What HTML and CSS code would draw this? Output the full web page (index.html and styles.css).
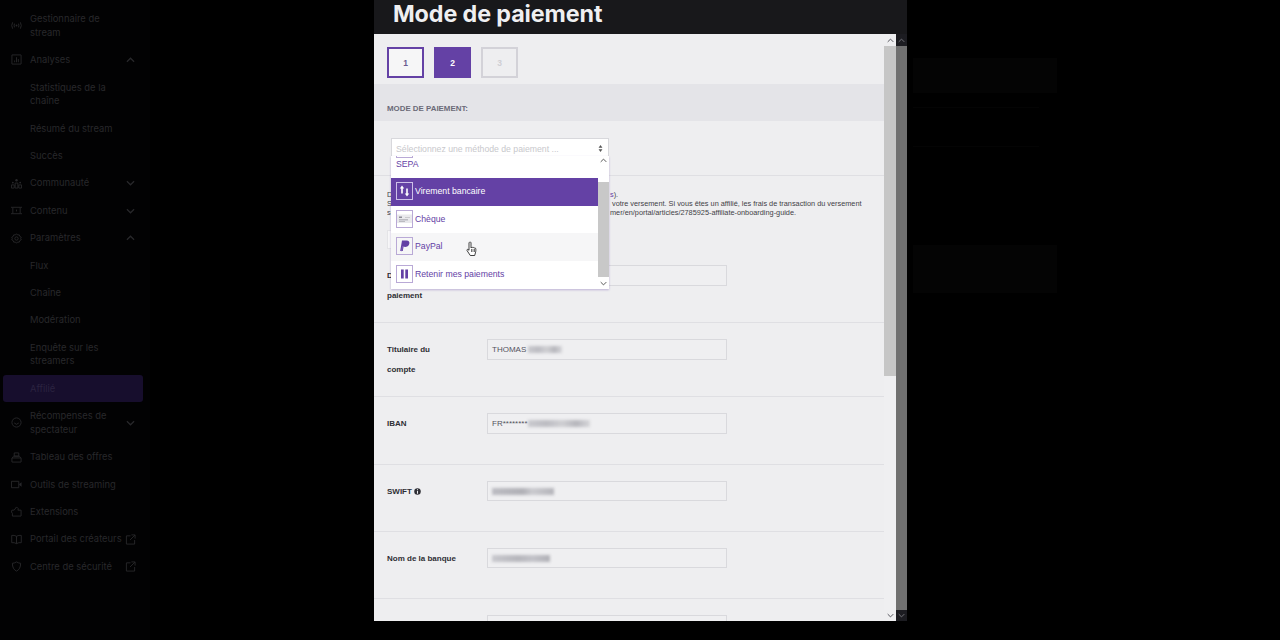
FILE: index.html
```html
<!DOCTYPE html>
<html lang="fr">
<head>
<meta charset="utf-8">
<title>Mode de paiement</title>
<link rel="stylesheet" href="styles.css">
</head>
<body>
<svg class="defs" width="0" height="0" aria-hidden="true">
  <symbol id="up" viewBox="0 0 10 6"><path d="M1 5l4-4 4 4" fill="none" stroke="currentColor" stroke-width="1.4"/></symbol>
  <symbol id="down" viewBox="0 0 10 6"><path d="M1 1l4 4 4-4" fill="none" stroke="currentColor" stroke-width="1.4"/></symbol>
  <symbol id="ext" viewBox="0 0 12 12"><path d="M6 2H1.500v9h9V6.500M7 1h4v4M11 1L5.500 6.500" fill="none" stroke="currentColor" stroke-width="1"/></symbol>
</svg>
<div class="app">
  <nav class="sidebar">
    <a class="nav-item"><svg class="ico" viewBox="0 0 12 12"><path d="M1.800 2.500Q-.2 6 1.800 9.500M10.200 2.500Q12.200 6 10.200 9.500M3.800 4Q3 6 3.800 8M8.200 4Q9 6 8.200 8" fill="none" stroke="currentColor"/><circle cx="6" cy="6" r="1" fill="currentColor"/></svg><span class="label">Gestionnaire de stream</span></a>
    <a class="nav-item"><svg class="ico" viewBox="0 0 12 12"><path d="M1 1h10v10H1zM4 9V7M6 9V3.500M8 9V5.500" fill="none" stroke="currentColor"/></svg><span class="label">Analyses</span><svg class="chev"><use href="#up"/></svg></a>
    <a class="nav-item sub"><span class="label">Statistiques de la chaîne</span></a>
    <a class="nav-item sub"><span class="label">Résumé du stream</span></a>
    <a class="nav-item sub"><span class="label">Succès</span></a>
    <a class="nav-item"><svg class="ico" viewBox="0 0 12 12"><path d="M.5 11V7.500h3V11zM4.500 11V5.500h3V11zM8.500 11V7.500h3V11z" fill="none" stroke="currentColor"/><circle cx="2" cy="5" r="1" fill="currentColor"/><circle cx="6" cy="2.500" r="1.300" fill="currentColor"/><circle cx="10" cy="5" r="1" fill="currentColor"/></svg><span class="label">Communauté</span><svg class="chev"><use href="#down"/></svg></a>
    <a class="nav-item"><svg class="ico" viewBox="0 0 12 12"><path d="M2 2.500h8v7H2zM0 2.500h2M10 2.500h2M0 9.500h2M10 9.500h2M6 5v2" fill="none" stroke="currentColor"/></svg><span class="label">Contenu</span><svg class="chev"><use href="#down"/></svg></a>
    <a class="nav-item"><svg class="ico" viewBox="0 0 12 12"><path d="M6 .8l1.200 1.400 1.800-.2.600 1.700 1.600.9-.6 1.400.6 1.400-1.600.9-.6 1.700-1.800-.2L6 11.200 4.800 9.800 3 10l-.6-1.700-1.600-.9L1.400 6 .8 4.600l1.600-.9L3 2l1.800.2z" fill="none" stroke="currentColor"/><circle cx="6" cy="6" r="1.800" fill="none" stroke="currentColor"/></svg><span class="label">Paramètres</span><svg class="chev"><use href="#up"/></svg></a>
    <a class="nav-item sub"><span class="label">Flux</span></a>
    <a class="nav-item sub"><span class="label">Chaîne</span></a>
    <a class="nav-item sub"><span class="label">Modération</span></a>
    <a class="nav-item sub"><span class="label">Enquête sur les streamers</span></a>
    <a class="nav-item sub active"><span class="label">Affilié</span></a>
    <a class="nav-item"><svg class="ico" viewBox="0 0 12 12"><circle cx="6" cy="6" r="5" fill="none" stroke="currentColor"/><path d="M3.500 6.500Q6 9.500 8.500 6.500" fill="none" stroke="currentColor"/></svg><span class="label">Récompenses de spectateur</span><svg class="chev"><use href="#down"/></svg></a>
    <a class="nav-item"><svg class="ico" viewBox="0 0 12 12"><path d="M3.500 1h5v3.500h-5zM1 6.500L3 4.500h6l2 2V11H1zM1 6.500h10" fill="none" stroke="currentColor"/></svg><span class="label">Tableau des offres</span></a>
    <a class="nav-item"><svg class="ico" viewBox="0 0 12 12"><path d="M.5 2.500h8v7h-8z" fill="none" stroke="currentColor"/><path d="M9 5.500L11.500 3.500v5L9 6.500z" fill="currentColor"/></svg><span class="label">Outils de streaming</span></a>
    <a class="nav-item"><svg class="ico" viewBox="0 0 12 12"><path d="M1 4.500h2.500L6 1l2 2-.5 1.500H11V11H1.500V8L.5 6.500z" fill="none" stroke="currentColor"/></svg><span class="label">Extensions</span></a>
    <a class="nav-item"><svg class="ico" viewBox="0 0 12 12"><path d="M6 2.500Q3.500 1 .8 1.500v8Q3.500 9 6 10.500 8.500 9 11.200 9.500v-8Q8.500 1 6 2.500zM6 2.500v8" fill="none" stroke="currentColor"/></svg><span class="label">Portail des créateurs</span><svg class="ext"><use href="#ext"/></svg></a>
    <a class="nav-item"><svg class="ico" viewBox="0 0 12 12"><path d="M6 1Q8.500 2.500 10.500 2.500 10.500 9 6 11 1.500 9 1.500 2.500 3.500 2.500 6 1z" fill="none" stroke="currentColor"/></svg><span class="label">Centre de sécurité</span><svg class="ext"><use href="#ext"/></svg></a>
  </nav>

  <section class="modal">
    <header class="modal-head"><h1>Mode de paiement</h1></header>
    <div class="modal-body">
      <div class="content">
        <div class="steps">
          <span class="step done">1</span>
          <span class="step current">2</span>
          <span class="step todo">3</span>
        </div>
        <h2 class="section-head">MODE DE PAIEMENT:</h2>
        <div class="select-row">
          <div class="select">
            <div class="select-box"><span>Sélectionnez une méthode de paiement ...</span><svg class="sort" viewBox="0 0 6 9"><path d="M3 0l2.500 3.500h-5zM3 9L.5 5.500h5z" fill="#555"/></svg></div>
            <div class="dropdown">
              <ul class="options">
                <li class="opt-sepa"><span class="sepa-frag"></span>SEPA</li>
                <li class="opt selected"><span class="opt-ico"><svg viewBox="0 0 15 15"><path d="M5 2l2.200 3H5.800v5H4.200V5H2.800zM10 13l-2.200-3h1.400V5h1.600v5h1.400z" fill="#fff"/></svg></span>Virement bancaire</li>
                <li class="opt"><span class="opt-ico"><svg viewBox="0 0 15 15"><rect x="0" y="3" width="15" height="8.500" fill="#e9e9ec"/><path d="M2 5h3v1.500H2zM2 8h9v.8H2zM2 9.500h6v.6H2z" fill="#8d8d96"/><path d="M8 6h5" stroke="#b5b5bb" stroke-width=".6"/></svg></span>Chèque</li>
                <li class="opt hover"><span class="opt-ico"><svg viewBox="0 0 15 15"><path d="M5 2h4.500c2.500 0 3.200 1.600 2.800 3.200C11.800 7.500 10 8.500 8 8.500H6.500L5.800 12.500H3.200z" fill="#6441a5"/><path d="M4.500 12.800L5.500 8h2.300" fill="none" stroke="#8f74c4" stroke-width=".7"/></svg></span>PayPal</li>
                <li class="opt"><span class="opt-ico"><svg viewBox="0 0 15 15"><path d="M4 3h2.700v9H4zM8.300 3H11v9H8.300z" fill="#6441a5"/></svg></span>Retenir mes paiements</li>
              </ul>
              <div class="list-scroll">
                <svg class="arrow"><use href="#up"/></svg>
                <span class="list-thumb"></span>
                <svg class="arrow"><use href="#down"/></svg>
              </div>
            </div>
          </div>
        </div>
        <div class="note">
          <p class="note-line"><span class="note-hidden n1">Des frais de transaction peuvent s'appliquer (<a class="note-link">voir les frai</a></span><span><a class="note-link">s</a>).</span></p>
          <p class="note-line"><span class="note-hidden n2">Sélectionnez le mode de paiement souhaité pour</span><span>votre versement. Si vous êtes un affilié, les frais de transaction du versement</span></p>
          <p class="note-line"><span class="note-hidden n1">seront déduits. Consultez help.twitch.tv/s/custo</span><span>mer/en/portal/articles/2785925-affiliate-onboarding-guide.</span></p>
          <span class="note-btn"></span>
        </div>
        <div class="form-row">
          <label class="field-label">Devise du paiement</label>
          <span class="field"></span>
        </div>
        <div class="form-row">
          <label class="field-label">Titulaire du compte</label>
          <span class="field">THOMAS<i class="redact r-name"></i></span>
        </div>
        <div class="form-row tall">
          <label class="field-label">IBAN</label>
          <span class="field">FR********<i class="redact r-iban"></i></span>
        </div>
        <div class="form-row">
          <label class="field-label wide">SWIFT <svg class="info" viewBox="0 0 8 8"><circle cx="4" cy="4" r="3.700" fill="#2f2f35"/><path d="M3.400 1.300h1.200v1.100H3.400zM3.400 3.200h1.200v3.500H3.400z" fill="#efeff1"/></svg></label>
          <span class="field short"><i class="redact r-swift"></i></span>
        </div>
        <div class="form-row">
          <label class="field-label wide">Nom de la banque</label>
          <span class="field short"><i class="redact r-bank"></i></span>
        </div>
        <div class="form-row">
          <label class="field-label"></label>
          <span class="field"></span>
        </div>
        <svg class="cursor" viewBox="0 0 12 16"><path d="M3.500 1.200c.8-.5 1.500 0 1.500.8V7l.6-.5c.5-.3 1.100-.2 1.300.2.500-.3 1.100-.2 1.300.3.500-.3 1.200-.2 1.500.4.300 1 .2 3-.3 4.500l-.7 2.600H4.300L1 9.500c-.4-.7.4-1.400 1.100-1L3 9.300V2c0-.3.200-.6.500-.8z" fill="#fff" stroke="#111" stroke-width=".8"/><path d="M5.500 8v3M7 8v3M8.500 8v3" stroke="#111" stroke-width=".6"/></svg>
      </div>
      <div class="bar bar-inner">
        <svg class="arrow"><use href="#up"/></svg>
        <span class="thumb-inner"></span>
        <span class="bar-fill"></span>
        <svg class="arrow"><use href="#down"/></svg>
      </div>
      <div class="bar bar-outer">
        <svg class="arrow"><use href="#up"/></svg>
        <span class="thumb-outer"></span>
        <svg class="arrow"><use href="#down"/></svg>
      </div>
    </div>
  </section>

  <aside class="backdrop">
    <div class="ghost g1"></div>
    <div class="ghost-line"></div>
    <div class="ghost-line"></div>
    <div class="ghost g2"></div>
  </aside>
</div>
</body>
</html>
```
FILE: styles.css
```css
* { box-sizing: border-box; }
html, body { margin: 0; height: 100%; background: #000; overflow: hidden; }
.defs { position: absolute; }
.app { display: flex; width: 1280px; height: 640px; }

/* sidebar */
.sidebar { width: 150px; flex: none; padding: 5.2px 0 0 3px; background: #020203; font: 400 9.4px/13.7px Inter, sans-serif; color: #28282b; }
.nav-item { display: flex; align-items: center; width: 140px; padding: 6.85px 0 6.85px 8px; border-radius: 3px; }
.nav-item.sub { padding-left: 27px; }
.nav-item.active { background: #170e2d; color: #2b2340; }
.ico { width: 11px; height: 11px; flex: none; margin-right: 8px; }
.label { width: 92px; flex: none; }
.nav-item:has(.ext) .label { white-space: nowrap; }
.chev { width: 9px; height: 6px; flex: none; margin: 0 8px 0 auto; }
.ext { width: 11px; height: 11px; flex: none; margin: 0 7px 0 auto; }

/* modal */
.modal { width: 533px; height: 621px; flex: none; margin-left: 224px; display: flex; flex-direction: column; }
.modal-head { height: 34px; flex: none; background: #18181b; padding: 0 0 0 19px; overflow: hidden; }
.modal-head h1 { margin: 0; font: 700 23.3px/28px Inter, sans-serif; color: #efeff1; letter-spacing: -.1px; }
.modal-body { flex: 1; min-height: 0; display: flex; }
.content { position: relative; flex: 1; min-width: 0; background: #eeeef0; overflow: hidden; font-family: "Liberation Sans", Arial, sans-serif; }

.steps { display: flex; gap: 10px; height: 50px; padding: 13px 13px 0; }
.step { width: 37px; height: 31px; display: flex; align-items: center; justify-content: center; font-size: 8.5px; font-weight: 700; border: 2px solid; }
.step.done { border-color: #6441a5; color: #6a5a90; background: #f6f6f7; }
.step.current { border-color: #6441a5; background: #6441a5; color: #fff; }
.step.todo { border-color: #d3d2d8; color: #cfcfd4; }

.section-head { margin: 0; height: 37px; padding: 20px 13px 0; background: #e4e4e8; font-size: 7.9px; line-height: 9px; font-weight: 700; color: #6b6a78; }

.select-row { height: 55px; padding: 17px 17px 0; border-bottom: 1px solid #dfdfe3; }
.select { position: relative; width: 218px; height: 37px; }
.select-box { display: flex; align-items: center; justify-content: space-between; height: 20px; padding: 0 5px 0 4px; background: #fff; border: 1px solid #d8d8dc; border-bottom: 0; font-size: 8.7px; color: #c8c8cc; }
.sort { width: 5px; height: 7px; }
.dropdown { position: absolute; left: 0; top: 18px; width: 218px; height: 133px; display: flex; background: #fff; box-shadow: 0 1px 2px rgba(100, 65, 165, .35); z-index: 3; overflow: hidden; }
.options { list-style: none; margin: 0; padding: 0; flex: 1; min-width: 0; font-size: 8.7px; color: #6441a5; }
.opt-sepa { position: relative; height: 22px; padding: 3px 0 0 5px; line-height: 10px; }
.sepa-frag { display: block; position: absolute; left: 5px; top: 0; width: 17px; height: 2px; border: 1px solid #b9a9d6; border-top: 0; }
.opt { height: 27.700px; display: flex; align-items: center; padding: 0 0 2px 5px; }
.opt.selected { background: #6441a5; color: #fff; }
.opt.hover { background: #f6f6f7; }
.opt-ico { width: 17px; height: 18px; flex: none; margin-right: 2px; border: 1px solid #b9a9d6; display: flex; }
.opt.selected .opt-ico { border-color: #cdbfe8; }
.opt-ico svg { width: 100%; height: 100%; }
.list-scroll { width: 11px; flex: none; display: flex; flex-direction: column; align-items: center; color: #555; }
.list-scroll .arrow { width: 7px; height: 5px; margin: 2px 0 0; flex: none; }
.list-thumb { width: 11px; height: 95px; margin: 19px 0 2px; background: #c8c8c8; flex: none; }

.note { height: 73px; padding: 14px 0 0 13px; position: relative; font-size: 7.33px; line-height: 9px; color: #3f3f46; }
.note-line { display: flex; margin: 0; white-space: nowrap; }
.note-hidden { flex: none; overflow: hidden; }
.n1 { width: 223px; }
.n2 { width: 225px; }
.note-link { color: #6441a5; }
.note-btn { display: block; width: 80px; height: 19px; margin-top: 13px; background: #f7f7f8; border: 1px solid #e4e4e7; }

.form-row { display: flex; min-height: 67px; padding: 16px 13px; border-bottom: 1px solid #dfdfe3; }
.form-row.tall { min-height: 68px; }
.field-label { width: 100px; flex: none; padding: 1px 28px 0 0; font-size: 8px; line-height: 20px; font-weight: 700; color: #2e2e34; }
.field-label.wide { padding-right: 0; }
.field { width: 240px; height: 21px; flex: none; display: flex; align-items: center; padding-left: 4px; background: #efeff1; border: 1px solid #d9d9dd; border-top-width: 1.500px; font-size: 8px; color: #53535f; }
.field.short { height: 20px; }
.info { width: 7px; height: 7px; vertical-align: -1px; }
.redact { display: block; height: 7px; background: linear-gradient(90deg, #c9c9ce, #bcbcc2 30%, #cfcfd3 55%, #b6b6bc 78%, #d6d6da); filter: blur(1.500px); }
.r-name { width: 34px; margin-left: 2px; }
.r-iban { width: 62px; }
.r-swift { width: 62px; background: linear-gradient(90deg, #bcbcc2, #b0b0b6 50%, #cacacf 65%, #b4b4ba); }
.r-bank { width: 58px; background: linear-gradient(90deg, #c8c8cd, #b6b6bc 45%, #c2c2c8 70%, #b0b0b6); }

.cursor { position: absolute; left: 92px; top: 207px; width: 12px; height: 16px; z-index: 5; }

/* scrollbars */
.bar { display: flex; flex-direction: column; align-items: center; flex: none; }
.bar .arrow { width: 7px; height: 5px; margin: 3px 0; flex: none; }
.bar > .arrow:first-child { margin-top: 4px; }
.bar-inner { width: 12px; background: #eeeef0; color: #55555c; }
.thumb-inner { width: 12px; height: 330px; background: #c6c6c6; flex: none; }
.bar-fill { flex: 1; width: 100%; background: #efeff1; }
.bar-outer { width: 11px; background: #1c1c21; color: #74747a; justify-content: space-between; }
.thumb-outer { width: 11px; flex: 1; background: #707070; }

/* page behind */
.backdrop { flex: 1; padding: 58px 0 0 6px; }
.ghost { width: 144px; height: 35px; background: #040404; }
.g2 { height: 48px; margin-top: 98px; }
.ghost-line { width: 126px; height: 1px; margin-top: 14px; background: #040404; }
.ghost-line + .ghost-line { margin-top: 38px; }
```
